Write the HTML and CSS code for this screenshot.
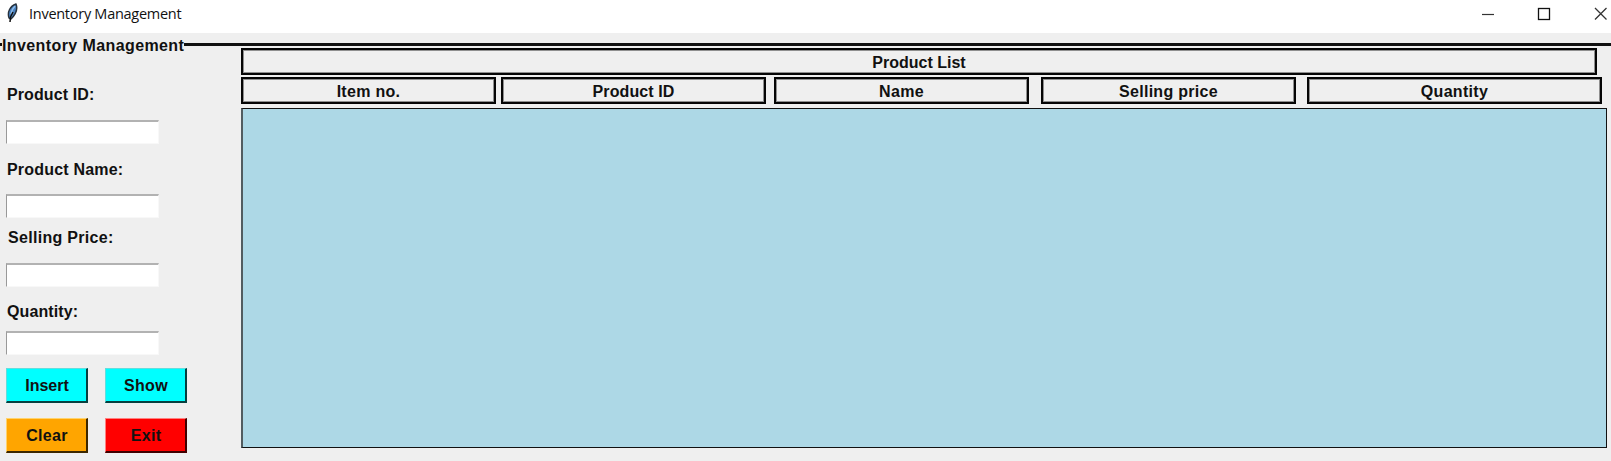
FILE: index.html
```html
<!DOCTYPE html>
<html lang="en">
<head>
<meta charset="utf-8">
<title>Inventory Management</title>
<link rel="stylesheet" href="styles.css">
</head>
<body>
<header class="titlebar">
  <svg class="feather" width="13" height="20" viewBox="0 0 13 20">
    <path d="M3 15C1 9 4 3 10 1C12 6 9 12 5 16Z" fill="#4a82c0" stroke="#26313d" stroke-width="1.400"/>
    <path d="M5 11C5.500 8 7 5 9 3" fill="none" stroke="#8fbdea" stroke-width="1.500"/>
    <path d="M4 19L4.500 14L7 9" fill="none" stroke="#111" stroke-width="1.500"/>
  </svg>
  <span class="title">Inventory Management</span>
  <svg class="controls" width="130" height="16" viewBox="0 0 130 16">
    <path d="M1 8.500H13" stroke="#333" stroke-width="1.200"/>
    <rect x="57.500" y="2.500" width="11" height="11" fill="none" stroke="#111" stroke-width="1.300"/>
    <path d="M114 2L125.500 13.500M125.500 2L114 13.500" stroke="#333" stroke-width="1.300"/>
  </svg>
</header>
<div class="legend"><span class="stub"></span><span class="legend-text">Inventory Management</span><span class="rule"></span></div>
<main class="content">
  <form class="form">
    <label class="label tight" for="pid">Product ID:</label>
    <input class="entry" id="pid">
    <label class="label name" for="pname">Product Name:</label>
    <input class="entry" id="pname">
    <label class="label price" for="price">Selling Price:</label>
    <input class="entry" id="price">
    <label class="label quantity tight" for="qty">Quantity:</label>
    <input class="entry" id="qty">
    <div class="buttons">
      <button type="button" class="button insert tight">Insert</button>
      <button type="button" class="button insert">Show</button>
      <button type="button" class="button clear">Clear</button>
      <button type="button" class="button exit">Exit</button>
    </div>
  </form>
  <section class="list">
    <div class="box heading">Product List</div>
    <div class="columns">
      <div class="box">Item no.</div>
      <div class="box tight">Product ID</div>
      <div class="box">Name</div>
      <div class="box">Selling price</div>
      <div class="box">Quantity</div>
    </div>
    <div class="canvas"></div>
  </section>
</main>
</body>
</html>
```
FILE: styles.css
```css
* { box-sizing: border-box; }
body {
  margin: 0;
  width: 1611px;
  height: 461px;
  overflow: hidden;
  background: #efefef;
  color: #111;
  font: bold 16px/20px "Liberation Sans", Arial, sans-serif;
  letter-spacing: 0.3px;
}
.titlebar {
  display: flex;
  height: 33px;
  padding-left: 6px;
  background: #fff;
}
.feather { margin-top: 3px; }
.title {
  margin: 4px 0 0 10px;
  font: 14.500px/20px "Open Sans", sans-serif;
  letter-spacing: -0.270px;
}
.controls { margin: 6px 0 0 auto; }
.legend { display: flex; height: 15px; }
.legend-text { margin-top: 4px; line-height: 18px; letter-spacing: 0.4px; white-space: nowrap; }
.stub, .rule { height: 3px; margin-top: 10px; background: #111; }
.stub { width: 2px; }
.rule { flex: 1; }
.content { display: flex; }
.form {
  display: flex;
  flex-direction: column;
  align-items: flex-start;
  width: 241px;
  padding: 37px 0 0 6px;
}
.label { height: 20px; margin: 0 0 15px 1px; }
.name { margin-top: 16px; margin-bottom: 14px; letter-spacing: 0.2px; }
.price { margin: 10px 0 15px 2px; }
.quantity { margin: 15px 0 9px 1px; }
.tight { letter-spacing: 0.1px; }
.entry {
  width: 153px;
  height: 24px;
  border: 1px solid #f8f8f8;
  border-top: 2px solid #b2b2b2;
  border-left: 1px solid #999;
  background: #fff;
}
.buttons {
  display: grid;
  grid-template-columns: 82px 82px;
  gap: 15px 17px;
  margin-top: 13px;
}
.button {
  height: 35px;
  padding: 2px 0 0 1px;
  border-style: solid;
  border-width: 1px 2px 2px 1px;
  color: #111;
  font: inherit;
  letter-spacing: 0.3px;
}
.button.tight { letter-spacing: 0; }
.insert { background: #00ffff; border-color: #62dede #063f3f #063f3f #62dede; }
.clear { background: #ffa500; border-color: #ffd36c #3c2700 #3c2700 #ffd36c; }
.exit { background: #ff0000; border-color: #ff8080 #400000 #400000 #ff8080; }
.list { width: 1366px; }
.box {
  height: 27px;
  border: 2px solid #050505;
  box-shadow: inset 0 0 0 1px rgba(0, 0, 0, 0.4);
  line-height: 25px;
  text-align: center;
}
.heading { width: 1356px; letter-spacing: 0; }
.columns {
  display: grid;
  grid-template-columns: 255px 266px 256px 255px 295px;
  column-gap: 0;
  justify-content: space-between;
  width: 1361px;
  margin: 2px 0 4px;
}
.columns { grid-template-columns: 255px 270px 263px 267px 306px; }
.columns .box:nth-child(2) { margin-left: 5px; }
.columns .box:nth-child(3) { margin-left: 8px; }
.columns .box:nth-child(4) { margin-left: 12px; }
.columns .box:nth-child(5) { margin-left: 11px; }
.canvas {
  height: 340px;
  border: 1px solid #111;
  border-left: 2px solid #525c60;
  background: #add8e6;
}
```
